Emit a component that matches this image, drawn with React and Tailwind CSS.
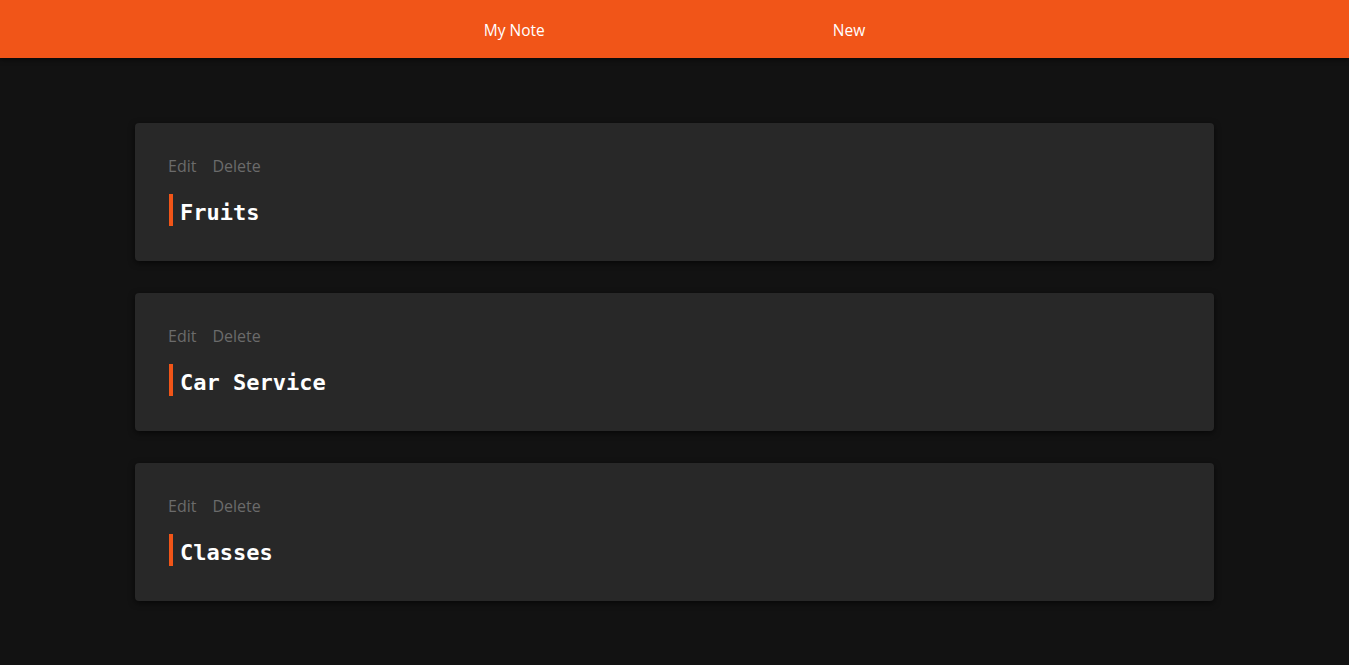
import React from "react";

const notes = [
  { id: 1, title: "Fruits" },
  { id: 2, title: "Car Service" },
  { id: 3, title: "Classes" },
];

const NoteCard = ({ title }) => {
  return (
    <div className="bg-[#282828] rounded-[4px] shadow-[0_2px_6px_rgba(0,0,0,0.6)] pl-[33px] pt-[33px] pb-[35px]">
      <div className="flex gap-4 text-base leading-5 text-[#6b6b6b]">
        <span className="cursor-pointer">Edit</span>
        <span className="cursor-pointer">Delete</span>
      </div>
      <div className="mt-[18px] ml-px h-8 flex items-center border-l-4 border-[#f15518] pl-[7px]">
        <h2 className="pt-[6px] text-[22px] font-bold text-white font-['DejaVu_Sans_Mono',monospace] leading-8">
          {title}
        </h2>
      </div>
    </div>
  );
};

const App = () => {
  return (
    <div className="min-h-screen bg-[#121212] font-['Open_Sans',sans-serif]">
      <nav className="h-[58px] pt-1 bg-[#f15518] shadow-[0_2px_4px_rgba(0,0,0,0.5)] flex items-center justify-center gap-[288px] text-[15.5px] text-white">
        <span className="cursor-pointer">My Note</span>
        <span className="cursor-pointer">New</span>
      </nav>

      <div className="w-[1079px] mx-auto pt-[65px] flex flex-col gap-8">
        {notes.map((note) => (
          <NoteCard key={note.id} title={note.title} />
        ))}
      </div>
    </div>
  );
};

export default App;
